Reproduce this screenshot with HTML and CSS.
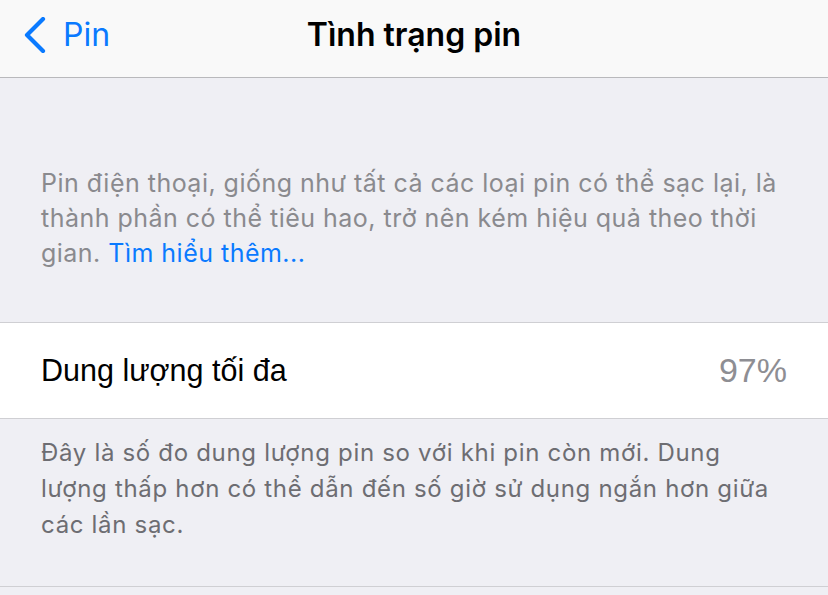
FILE: index.html
```html
<!DOCTYPE html>
<html lang="vi">
<head>
    <meta charset="UTF-8">
    <meta name="viewport" content="width=device-width, initial-scale=1.0">
    <title>Tình trạng pin</title>
    <link rel="stylesheet" href="styles.css">
</head>
<body>
    <!-- Top navigation bar -->
    <div class="navbar">
        <a class="back" href="#">
            <svg class="chevron" width="22" height="36" viewBox="0 0 22 36">
                <path d="M19 2 L3 18 L19 34" fill="none" stroke="#0a7aff" stroke-width="4.2" stroke-linecap="round" stroke-linejoin="round"/>
            </svg>
            <span>Pin</span>
        </a>
        <div class="title">Tình trạng pin</div>
    </div>

    <div class="group-header">
        <p>Pin điện thoại, giống như tất cả các loại pin có thể sạc lại, là thành phần có thể tiêu hao, trở nên kém hiệu quả theo thời gian. <a href="#">Tìm hiểu thêm...</a></p>
    </div>

    <div class="cell">
        <span class="label">Dung lượng tối đa</span>
        <span class="value">97%</span>
    </div>

    <div class="group-footer">
        <p>Đây là số đo dung lượng pin so với khi pin còn mới. Dung lượng thấp hơn có thể dẫn đến số giờ sử dụng ngắn hơn giữa các lần sạc.</p>
    </div>
</body>
</html>
```

FILE: styles.css
```css
body {
    margin: 0;
    background: #efeff4;
    font-family: Inter, "Liberation Sans", Arial, sans-serif;
    height: 595px;
    overflow: hidden;
}

.navbar {
    position: relative;
    height: 77px;
    background: #f9f9f9;
    border-bottom: 1px solid #b9b9bc;
    display: flex;
    align-items: center;
    justify-content: center;
}

.back {
    position: absolute;
    left: 24px;
    top: 15px;
    display: flex;
    align-items: center;
    gap: 17px;
    color: #0a7aff;
    text-decoration: none;
    font-size: 32px;
}

.title {
    font-size: 32px;
    font-weight: 600;
    color: #000;
    margin-top: -8px;
}

.group-header {
    padding: 88px 28px 0 41px;
    height: 156px;
    border-bottom: 1px solid #cfcfd3;
}

.group-header p,
.group-footer p {
    margin: 0;
    font-size: 25px;
    line-height: 35px;
}

.group-header p {
    color: #8a8a8e;
    letter-spacing: 0.48px;
}

.group-header a {
    color: #0a7aff;
    text-decoration: none;
}

.cell {
    height: 95px;
    background: #fff;
    border-bottom: 1px solid #cfcfd3;
    display: flex;
    align-items: center;
    justify-content: space-between;
    padding: 0 41px;
    font-family: "Liberation Sans", Arial, sans-serif;
}

.cell .label {
    color: #000;
    font-size: 30.5px;
}

.cell .value {
    color: #8e8e93;
    font-size: 34px;
}

.group-footer {
    padding: 16px 50px 0 41px;
    height: 151px;
    border-bottom: 1px solid #cfcfd3;
}

.group-footer p {
    color: #6d6d72;
    font-size: 24px;
    line-height: 36px;
    letter-spacing: 0.68px;
}
```
